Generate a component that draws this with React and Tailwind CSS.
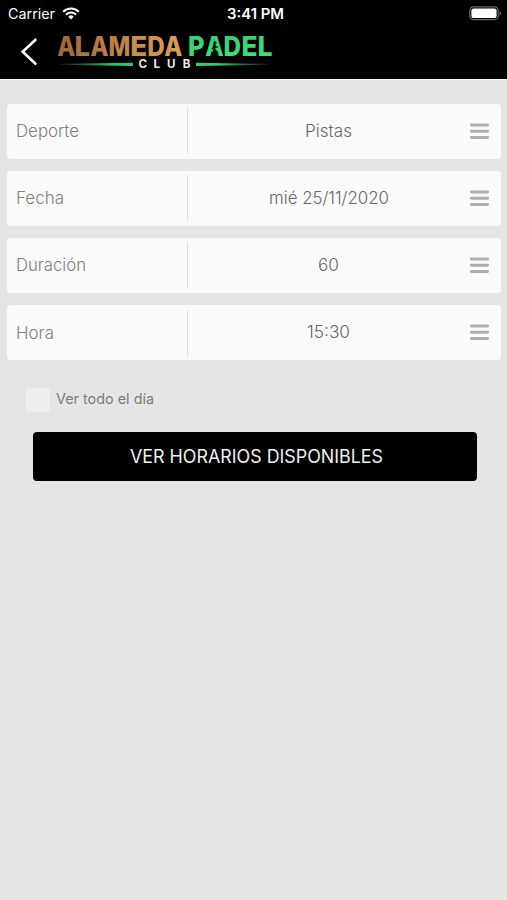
const fields = [
  { label: 'Deporte', value: 'Pistas', width: 63, valueWidth: 47 },
  { label: 'Fecha', value: 'mié 25/11/2020', width: 48, valueWidth: 120 },
  { label: 'Duración', value: '60', width: 70, valueWidth: 21 },
  { label: 'Hora', value: '15:30', width: 38, valueWidth: 43 },
];

// x position and advance of every letter in the wordmark
const alameda = [
  ['A', 0.2, 18], ['L', 17.6, 15.5], ['A', 33.4, 18], ['M', 51.6, 21.8],
  ['E', 73.2, 17], ['D', 90.2, 17.5], ['A', 107.2, 18],
];
const padel = [
  ['P', 131, 16.6], ['A', 148.2, 18.4], ['D', 166.4, 17.5], ['E', 184.4, 16], ['L', 200.4, 15],
];
const club = [['C', 85.7], ['L', 99.7], ['U', 114.3], ['B', 129.7]];

function Text({ children, width, size, className = '' }) {
  return (
    <svg width={width} height="24" className={`shrink-0 overflow-visible ${className}`} fill="currentColor">
      <text x="0" y="18" fontSize={size} textLength={width} lengthAdjust="spacingAndGlyphs">{children}</text>
    </svg>
  );
}

function Wifi() {
  return (
    <svg width="18" height="13" viewBox="0 0 18 13" fill="none" stroke="#fff" strokeWidth="2">
      <path d="M1.2 4.8a11 11 0 0 1 15.6 0M4 7.7a7 7 0 0 1 10 0" />
      <path d="M9 12.4 6.3 9.7a3.8 3.8 0 0 1 5.4 0z" fill="#fff" stroke="none" />
    </svg>
  );
}

function Battery() {
  return (
    <svg width="33" height="15" viewBox="0 0 33 15">
      <rect x="0.8" y="0.8" width="28.4" height="12.9" rx="3.8" fill="none" stroke="#6b6b6b" strokeWidth="1.2" />
      <rect x="2.4" y="2.4" width="25.2" height="9.7" rx="2.2" fill="#fff" />
      <path d="M30.6 5v4.6q1.5-.8 1.5-2.3T30.6 5z" fill="#6b6b6b" />
    </svg>
  );
}

function Letters({ items, fill }) {
  return items.map(([char, x, width]) => (
    <text key={x} x={x} y="20.2" fontSize="26.5" textLength={width} lengthAdjust="spacingAndGlyphs" fill={fill}>{char}</text>
  ));
}

function Logo() {
  return (
    <svg width="218" height="38" viewBox="0 0 218 38" className="overflow-visible font-['Inter',sans-serif] font-bold">
      <defs>
        <linearGradient id="copper" gradientUnits="userSpaceOnUse" x1="0" x2="126" y1="0" y2="0">
          <stop offset="0" stopColor="#9c6644" />
          <stop offset="0.5" stopColor="#bf844c" />
          <stop offset="1" stopColor="#dba05c" />
        </linearGradient>
        <linearGradient id="green" x1="0" x2="0" y1="0" y2="1">
          <stop offset="0" stopColor="#35cc72" />
          <stop offset="1" stopColor="#48dc7c" />
        </linearGradient>
        <linearGradient id="lineLeft">
          <stop offset="0" stopColor="#30b860" stopOpacity="0.15" />
          <stop offset="0.7" stopColor="#32c269" />
        </linearGradient>
        <linearGradient id="lineRight">
          <stop offset="0.3" stopColor="#35cc72" />
          <stop offset="1" stopColor="#35cc72" stopOpacity="0.15" />
        </linearGradient>
      </defs>
      <g className="font-extrabold">
        <Letters items={alameda} fill="url(#copper)" />
        <Letters items={padel} fill="url(#green)" />
      </g>
      <g fill="none" stroke="#06170d" strokeLinecap="round" strokeLinejoin="round">
        <circle cx="158" cy="6.8" r="1.5" fill="#06170d" stroke="none" />
        <path d="M157.300 9.600v4.600l-2.600 5.500M157.600 13.800l2.600 2.600.2 3.200" strokeWidth="2" />
        <path d="M157.300 10l-2.200 3M158 10l2.600 1.200" strokeWidth="1.200" />
      </g>
      <path d="M3 27.800 76 26.800v3.200L3 28.800z" fill="url(#lineLeft)" />
      <path d="M139 26.800v3.200L211 28.800v-1z" fill="url(#lineRight)" />
      <g fill="#ececec" fontSize="11.600" textAnchor="middle">
        {club.map(([char, x]) => <text key={char} x={x} y="32.200">{char}</text>)}
      </g>
    </svg>
  );
}

function MenuBars() {
  return (
    <svg width="19" height="17" viewBox="0 0 19 17" fill="#adadad">
      <rect y="0.4" width="19" height="3" rx="1.4" />
      <rect y="6.7" width="19" height="3" rx="1.4" />
      <rect y="13" width="19" height="3" rx="1.4" />
    </svg>
  );
}

export default function App() {
  return (
    <div className="h-[900px] w-[507px] overflow-hidden bg-[#e5e5e5] font-['Inter',sans-serif]">
      <header className="h-[79px] bg-black text-white">
        <div className="grid h-[27px] grid-cols-3 items-center pl-2 pr-[5px]">
          <div className="flex items-center gap-[7px]">
            <Text width={47} size={14} className="mb-px">Carrier</Text>
            <Wifi />
          </div>
          <div className="flex justify-center pl-0.5">
            <Text width={57} size={14} className="mb-px font-semibold">3:41 PM</Text>
          </div>
          <div className="flex justify-end"><Battery /></div>
        </div>
        <div className="flex pl-5">
          <svg width="18" height="29" viewBox="0 0 18 29" fill="none" stroke="currentColor" strokeWidth="2.6" strokeLinecap="round" className="mt-[10px]">
            <path d="M15.500 2.700 2.700 14.700l12.800 12" />
          </svg>
          <div className="ml-[19px] mt-[9px]"><Logo /></div>
        </div>
      </header>

      <main className="border-t border-[#f8f8f8] pt-[23.5px]">
        <div className="flex flex-col gap-[12.2px] pl-[7px] pr-[6px]">
          {fields.map(field => (
            <div key={field.label} className="flex h-[55px] items-center rounded bg-[#fafafa]">
              <div className="flex w-[180px] pl-[9px] text-[#808080]">
                <Text width={field.width} size={17} className="font-light">{field.label}</Text>
              </div>
              <div className="h-[46px] w-px bg-[#dedede]" />
              <div className="mb-px flex flex-1 justify-center pr-px text-[#686868]">
                <Text width={field.valueWidth} size={17} className="font-light">{field.value}</Text>
              </div>
              <div className="mr-3"><MenuBars /></div>
            </div>
          ))}
        </div>

        <label className="mt-[27.500px] ml-[26px] flex h-6 items-center gap-[6px] text-[#7c7c7c]">
          <span className="size-6 rounded bg-[#efefef]" />
          <Text width={98} size={14.5} className="mb-[3px]">Ver todo el día</Text>
        </label>

        <button className="mt-5 ml-[32.500px] flex h-[49px] w-[444px] items-center justify-center rounded bg-black pt-0.5 pl-1 text-[#f0f0f0]">
          <Text width={253} size={18}>VER HORARIOS DISPONIBLES</Text>
        </button>
      </main>
    </div>
  );
}
